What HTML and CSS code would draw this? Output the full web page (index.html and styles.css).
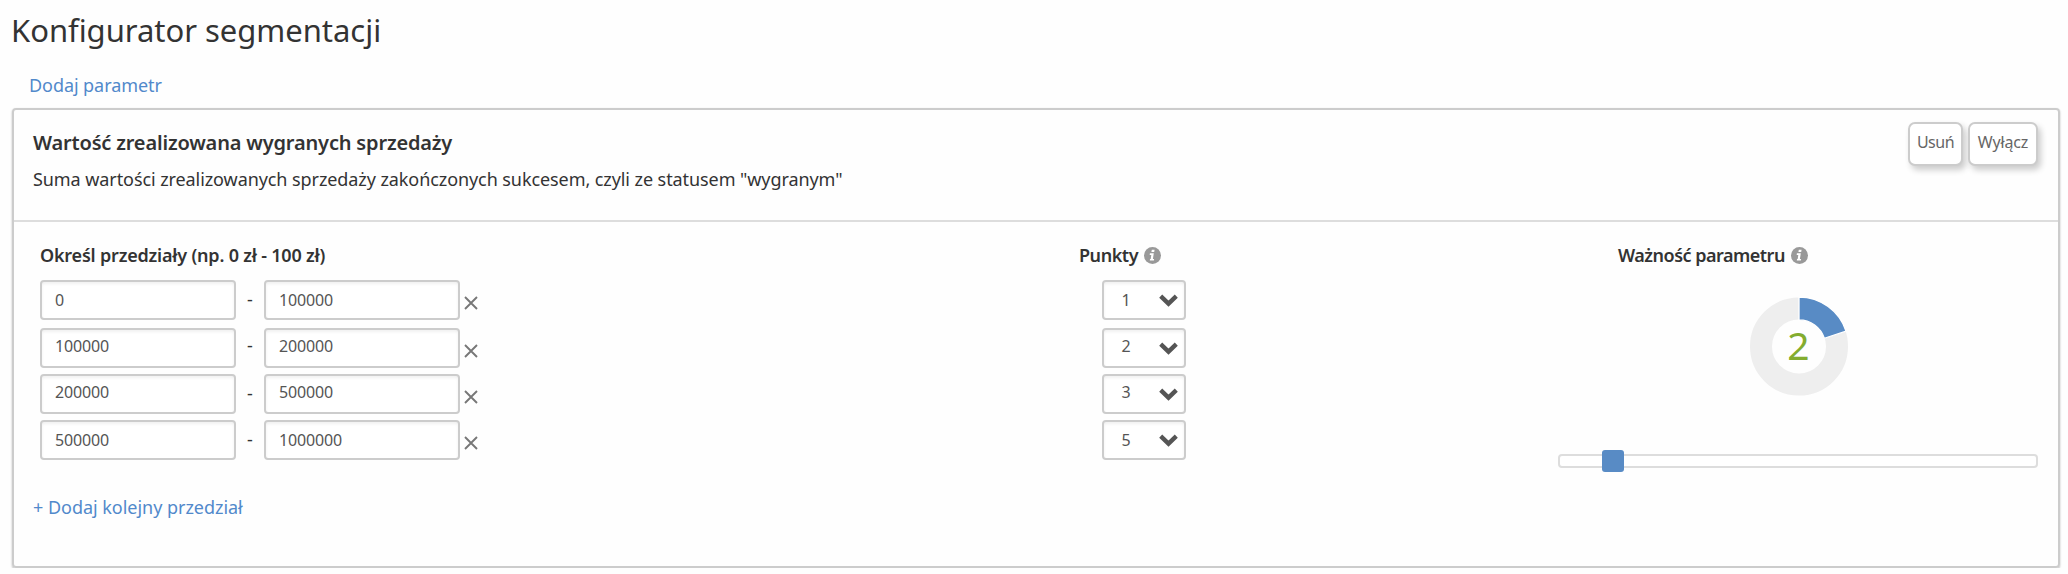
FILE: index.html
```
<!DOCTYPE html>
<html lang="pl">
<head>
    <meta charset="UTF-8">
    <meta name="viewport" content="width=device-width, initial-scale=1.0">
    <title>Konfigurator segmentacji</title>
    <link rel="stylesheet" href="styles.css">
</head>
<body>
    <!-- Shared icons -->
    <svg class="sprite" aria-hidden="true">
        <symbol id="icon-info" viewBox="0 0 17 17">
            <circle cx="8.5" cy="8.5" r="8.5" fill="#999"/>
            <path d="M7.8 2.8h2.8l-.4 2.3H7.4zM5.9 6.3h3.9L8.9 12h1.2l-.2 1.5H5.8L6 12h.7l.6-4.1H5.7z" fill="#fff"/>
        </symbol>
        <symbol id="icon-remove" viewBox="0 0 14 14">
            <path d="M1 1l12 12M13 1L1 13" fill="none" stroke="#777" stroke-width="1.9"/>
        </symbol>
        <symbol id="icon-chevron" viewBox="0 0 19 13">
            <path d="M1.7 2.2l7.8 7.4 7.8-7.4" fill="none" stroke="#555" stroke-width="4.4"/>
        </symbol>
    </svg>

    <h1 class="page-title">Konfigurator segmentacji</h1>
    <a class="link add-param">Dodaj parametr</a>

    <div class="card">
        <div class="card-header">
            <div>
                <h2 class="card-title">Wartość zrealizowana wygranych sprzedaży</h2>
                <p class="card-desc">Suma wartości zrealizowanych sprzedaży zakończonych sukcesem, czyli ze statusem "wygranym"</p>
            </div>
            <div class="card-buttons">
                <button class="btn btn-delete">Usuń</button>
                <button class="btn btn-disable">Wyłącz</button>
            </div>
        </div>

        <div class="card-body">
            <div class="ranges">
                <h3 class="label">Określ przedziały (np. 0 zł - 100 zł)</h3>
                <div class="row row-first">
                    <input class="field" type="text" value="0">
                    <span class="dash">-</span>
                    <input class="field" type="text" value="100000">
                    <svg class="remove"><use href="#icon-remove"/></svg>
                </div>
                <div class="row row-second">
                    <input class="field" type="text" value="100000">
                    <span class="dash">-</span>
                    <input class="field" type="text" value="200000">
                    <svg class="remove"><use href="#icon-remove"/></svg>
                </div>
                <div class="row row-third">
                    <input class="field" type="text" value="200000">
                    <span class="dash">-</span>
                    <input class="field" type="text" value="500000">
                    <svg class="remove"><use href="#icon-remove"/></svg>
                </div>
                <div class="row">
                    <input class="field" type="text" value="500000">
                    <span class="dash">-</span>
                    <input class="field" type="text" value="1000000">
                    <svg class="remove"><use href="#icon-remove"/></svg>
                </div>
                <a class="link add-range">+ Dodaj kolejny przedział</a>
            </div>

            <div class="points">
                <h3 class="label label-points">Punkty <svg class="info"><use href="#icon-info"/></svg></h3>
                <div class="row row-first">
                    <div class="select"><span class="value">1</span><svg class="chevron"><use href="#icon-chevron"/></svg></div>
                </div>
                <div class="row row-second">
                    <div class="select"><span class="value">2</span><svg class="chevron"><use href="#icon-chevron"/></svg></div>
                </div>
                <div class="row row-third">
                    <div class="select"><span class="value">3</span><svg class="chevron"><use href="#icon-chevron"/></svg></div>
                </div>
                <div class="row">
                    <div class="select"><span class="value">5</span><svg class="chevron"><use href="#icon-chevron"/></svg></div>
                </div>
            </div>

            <div class="weight">
                <h3 class="label label-weight">Ważność parametru <svg class="info"><use href="#icon-info"/></svg></h3>
                <svg class="donut" viewBox="-50 -49.5 100 100">
                    <circle r="38" fill="none" stroke="#eee" stroke-width="22"/>
                    <path d="M0-49.5A49.5 49.5 0 0 1 47.08-15.3L25.3-8.22A26.6 26.6 0 0 0 0-26.6z" fill="#588bc5" stroke="#fff" stroke-width="1.3"/>
                    <text class="donut-value" x="-.5" y="13.5" text-anchor="middle">2</text>
                </svg>
                <div class="slider">
                    <div class="slider-handle"></div>
                </div>
            </div>
        </div>
    </div>
</body>
</html>
```
FILE: styles.css
```
* {
    box-sizing: border-box;
}

body {
    margin: 0;
    padding: 8px 8px 0 12px;
    background: #fefefe;
    color: #333;
    font-family: "Noto Sans", "Open Sans", sans-serif;
    font-size: 18px;
    line-height: 26px;
}

h1, h2, h3, p {
    margin: 0;
}

svg {
    display: block;
    flex: none;
}

.sprite {
    position: absolute;
    width: 0;
    height: 0;
}

.page-title {
    margin-left: -1px;
    font-size: 31px;
    font-weight: 400;
    line-height: 44px;
    letter-spacing: -0.03px;
}

.link {
    display: block;
    color: #5189cb;
    cursor: pointer;
}

.add-param {
    margin: 20px 0 10px 17px;
    letter-spacing: -0.07px;
}

/* Card */
.card {
    height: 460px;
    border: 2px solid #ccc;
    border-radius: 4px;
    box-shadow: 0 1px 2px rgba(0, 0, 0, 0.3);
}

.card-header {
    display: flex;
    justify-content: space-between;
    height: 112px;
    padding: 19px 20px 0 19px;
    border-bottom: 2px solid #ddd;
}

.card-title {
    font-size: 20px;
    font-weight: 600;
    line-height: 28px;
    letter-spacing: -0.17px;
}

.card-desc {
    margin-top: 9px;
    letter-spacing: -0.08px;
}

.card-buttons {
    display: flex;
    gap: 5px;
    margin-top: -7px;
}

.btn {
    height: 44px;
    padding: 0 0 4px;
    border: 2px solid #ccc;
    border-radius: 7px;
    background: #fff;
    box-shadow: 3px 4px 6px rgba(0, 0, 0, 0.2);
    color: #666;
    font-family: inherit;
    font-size: 16px;
    cursor: pointer;
}

.btn-delete {
    width: 55px;
    letter-spacing: -0.5px;
}

.btn-disable {
    width: 70px;
    letter-spacing: -0.16px;
}

.card-body {
    display: grid;
    grid-template-columns: 1040px 478px 480px;
    padding: 20px 0 0 26px;
}

.label {
    display: flex;
    align-items: center;
    margin-bottom: 12px;
    font-size: 18px;
    font-weight: 600;
    letter-spacing: -0.2px;
}

.label-points {
    gap: 6px;
    margin-left: -1px;
    letter-spacing: -0.45px;
}

.label-weight {
    gap: 6px;
    margin-left: 60px;
    letter-spacing: -0.5px;
}

.info {
    width: 17px;
    height: 17px;
}

/* Range rows */
.row {
    display: flex;
    height: 40px;
    margin-bottom: 6px;
}

.row-first {
    margin-bottom: 8px;
}

.row:last-of-type {
    margin-bottom: 0;
}

.field,
.select {
    height: 40px;
    border: 2px solid #ccc;
    border-radius: 4px;
    background: #fff;
    box-shadow: inset 0 2px 3px rgba(0, 0, 0, 0.06);
    color: #555;
    font-family: inherit;
    font-size: 16px;
    letter-spacing: -0.16px;
}

.field {
    width: 196px;
    padding: 0 13px;
}

.row-second .field,
.row-third .field {
    padding-bottom: 4px;
}

.dash {
    width: 28px;
    line-height: 38px;
    text-align: center;
}

.row-second .dash {
    line-height: 34px;
}

.remove {
    width: 14px;
    height: 14px;
    margin: 15.5px 0 0 3.5px;
}

.add-range {
    margin: 34px 0 0 -7px;
    letter-spacing: -0.03px;
}

/* Points */
.points .row {
    padding-left: 22px;
}

.select {
    display: flex;
    justify-content: space-between;
    width: 84px;
    padding: 0 6.5px 0 17.5px;
}

.value {
    line-height: 36px;
}

.row-second .value,
.row-third .value {
    line-height: 32px;
}

.chevron {
    width: 19px;
    height: 13px;
    margin-top: 12px;
}

/* Weight */
.donut {
    width: 100px;
    height: 100px;
    margin: 29px 0 57px 191px;
}

.donut-value {
    fill: #83ac2f;
    font-size: 39px;
}

.slider {
    height: 14px;
    border: 2px solid #ddd;
    border-radius: 4px;
    background: #fff;
}

.slider-handle {
    width: 22px;
    height: 22px;
    margin: -6px 0 0 42px;
    border-radius: 3px;
    background: #588bc5;
}
```
